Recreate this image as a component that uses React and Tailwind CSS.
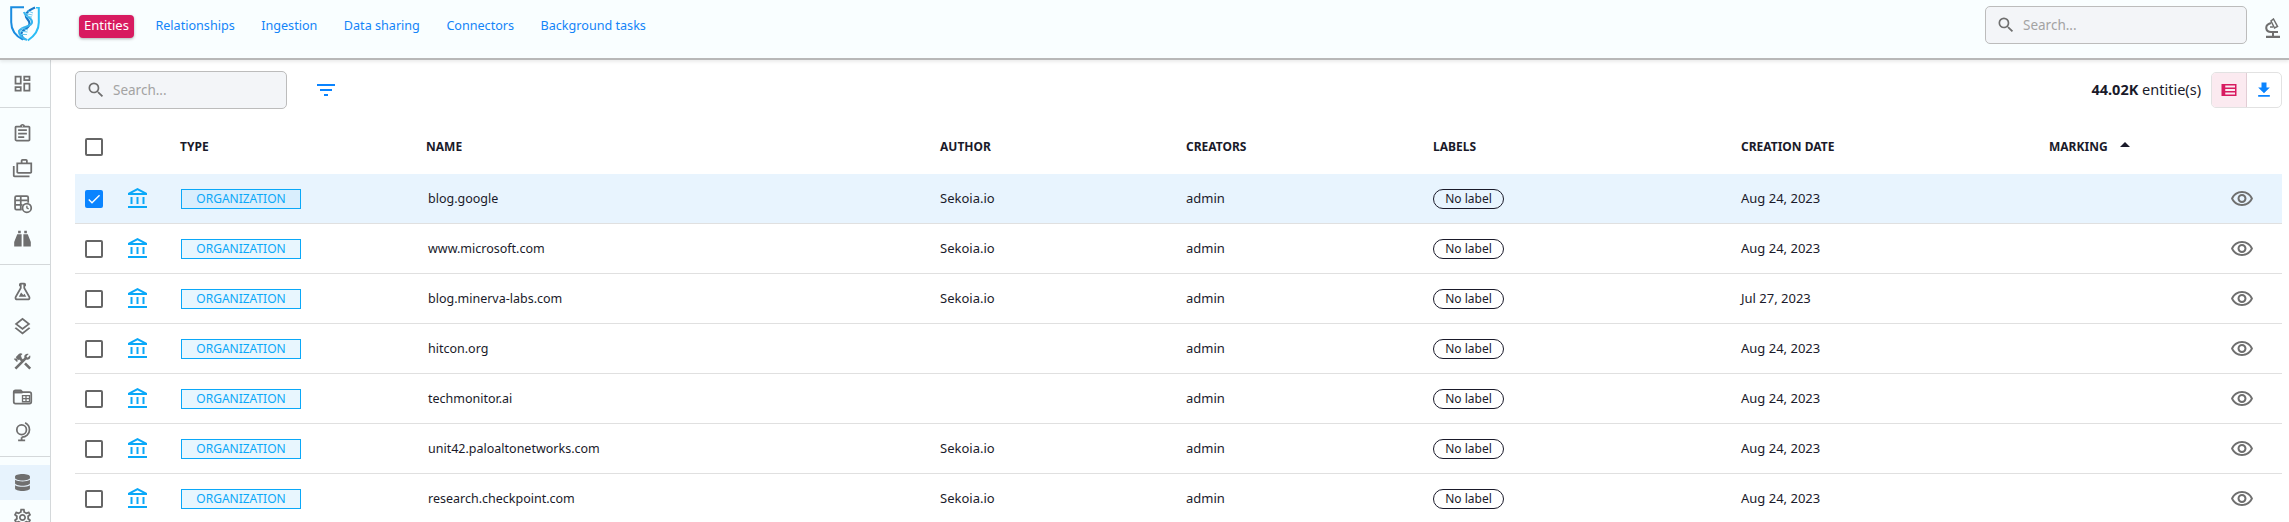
import React from "react";
import {
  MdOutlineDashboard, MdOutlineAssignment, MdOutlineCases, MdOutlineLayers, MdOutlineConstruction,
  MdOutlineSettings, MdOutlineAccountBalance, MdOutlineVisibility, MdSearch, MdFilterList, MdFileDownload, MdCheck,
} from "react-icons/md";
import { FaDatabase } from "react-icons/fa";

const I = ({ d }) => (
  <svg viewBox="0 0 24 24" width="24" height="24" fill="currentColor"><path d={d} /></svg>
);

const TableClock = () => (
  <svg viewBox="0 0 24 24" width="24" height="24" fill="none" stroke="currentColor" strokeWidth="2">
    <path d="M11 19H5a1.500 1.500 0 0 1-1.500-1.500V5A1.500 1.500 0 0 1 5 3.500h12A1.500 1.500 0 0 1 18.500 5v6" />
    <path d="M4 8.500h14M4 13.500h8M10 4v15" />
    <circle cx="17" cy="17" r="5" />
    <path d="M17 14.500V17l2 1.200" strokeWidth="1.500" />
  </svg>
);
const Binoculars = () => (
  <svg viewBox="0 0 24 24" width="24" height="24" fill="currentColor">
    <path d="M7 3h3v3H7zM14 3h3v3h-3zM6 7h5v14H2.500v-5zM13 7h5l3.500 9v5H13z" />
  </svg>
);
const Flask = () => (
  <I d="M5 19a1 1 0 0 0 1 1h12a1 1 0 0 0 1-1c0-.21-.07-.41-.18-.57L13 8.35V4h-2v4.35L5.18 18.43c-.11.16-.18.36-.18.57m1 3a3 3 0 0 1-3-3c0-.6.18-1.160.5-1.630L9 7.810V6a1 1 0 0 1-1-1V4a2 2 0 0 1 2-2h4a2 2 0 0 1 2 2v1a1 1 0 0 1-1 1v1.810l5.500 9.560c.32.47.5 1.030.5 1.630a3 3 0 0 1-3 3H6m7-6 1.340-1.340L16.270 18H7.730l2.660-4.930L13 16Z" />
);
const FolderTable = () => (
  <svg viewBox="0 0 24 24" width="24" height="24" fill="none" stroke="currentColor">
    <path d="M4 5h6l2 2h8a2 2 0 0 1 2 2v9a2 2 0 0 1-2 2H4a2 2 0 0 1-2-2V7a2 2 0 0 1 2-2Z" strokeWidth="2" />
    <path d="M2 6h9l1 2H2Z" fill="currentColor" strokeWidth="1" />
    <path d="M12 11h8v7h-8zM16 11v7M12 14.500h8" strokeWidth="1.500" />
  </svg>
);
const Globe = () => (
  <svg viewBox="0 0 24 24" width="24" height="24" fill="none" stroke="currentColor" strokeWidth="2">
    <circle cx="11" cy="10" r="5.500" />
    <path d="M15 2c3 1.600 5 4.600 5 8a8.500 8.500 0 0 1-9 8.500M11 18.500V22M7 22h8" />
  </svg>
);
const Microscope = () => (
  <svg viewBox="0 0 16 20" width="16" height="20" fill="none" stroke="#6f6f6f">
    <path d="M8.500 1l4 7.500-3 1.500L6 3z" strokeWidth="1.500" />
    <path d="M6 5C2.500 6 1 8.500 1.300 10.500 1.700 13 4 14 6 14h7" strokeWidth="2" />
    <path d="M1 19h14" strokeWidth="2.500" />
    <path d="M8 14v4" strokeWidth="2" />
    <path d="M5 9h3" strokeWidth="1.500" />
  </svg>
);
const ViewList = () => (
  <svg viewBox="0 0 24 24" width="24" height="24" fill="none" stroke="currentColor" strokeWidth="2">
    <rect x="3" y="5" width="18" height="14" />
    <path d="M3 9.700h18M3 14.300h18" />
    <rect x="3" y="5" width="4" height="14" fill="currentColor" stroke="none" />
  </svg>
);
const Logo = () => (
  <svg viewBox="0 0 30 36" width="30" height="36" fill="none">
    <path d="M14 1.200H1.200v15c0 9 6 14.500 11.800 17.500" stroke="#1a8ce0" strokeWidth="2" />
    <path d="M27 1v1.500M28.800 1v15.500c0 8-5 14-11 18" stroke="#2bbdf5" strokeWidth="2" />
    <path d="M25 1.500C17 5 14 8.500 17 12.500c3 3.500 4 7-1 10-6 3.500-6 7-1 11" stroke="#1778c9" strokeWidth="2.200" />
    <path d="M14 6c1 5 8 5 8 10 0 5-10 4-13 9 0 4 3 7 8 9" stroke="#38b4ee" strokeWidth="2.200" />
    <path d="M17 4.500l6 2.500M15.500 7.500l7 1.500M16 10.500l6 .5M11 22l7 2M9.500 25l8 1M11 28.500l6 0" stroke="#68c8f0" strokeWidth="1" />
  </svg>
);

const groups = [
  ["pt-[6px] pb-[6px]", [MdOutlineDashboard]],
  ["pt-2 pb-2", [MdOutlineAssignment, MdOutlineCases, TableClock, Binoculars]],
  ["pt-[9px] pb-[7px]", [Flask, MdOutlineLayers, MdOutlineConstruction, FolderTable, Globe]],
];

const rows = [
  ["blog.google", "Sekoia.io", "Aug 24, 2023"],
  ["www.microsoft.com", "Sekoia.io", "Aug 24, 2023"],
  ["blog.minerva-labs.com", "Sekoia.io", "Jul 27, 2023"],
  ["hitcon.org", "", "Aug 24, 2023"],
  ["techmonitor.ai", "", "Aug 24, 2023"],
  ["unit42.paloaltonetworks.com", "Sekoia.io", "Aug 24, 2023"],
  ["research.checkpoint.com", "Sekoia.io", "Aug 24, 2023"],
];

const cols = "grid grid-cols-[52px_53px_246px_514px_246px_247px_308px_308px_1fr] items-center";

const Search = ({ w }) => (
  <div className={`flex h-[38px] items-center rounded-[5px] border border-[#bcbcbc] bg-[#f3f5f8] pl-[10px] text-[#6f6f6f] ${w}`}>
    <MdSearch size={20} />
    <span className="ml-[7px] text-[13.5px] text-[#a3a3a3]">Search...</span>
  </div>
);

const Head = ({ children, extra = "" }) => (
  <div className={`text-[12px] font-bold text-[#1a1a2a] ${extra}`}>{children}</div>
);

export default function App() {
  return (
    <div className="flex h-[522px] w-[2289px] flex-col overflow-hidden bg-white font-['Noto_Sans',sans-serif] text-[#1a1a2a]">
      <header className="z-10 flex h-[60px] shrink-0 items-center border-b-2 border-[#b8b8b8] bg-[#f9feff] pr-[8px] shadow-[0_2px_3px_rgba(0,0,0,0.08)]">
        <div className="ml-[10px] w-[30px] -translate-y-[5px]"><Logo /></div>
        <nav className="ml-[39px] flex -translate-y-[3px] items-center gap-[16.5px] text-[12.6px] text-[#1384f8]">
          <span className="flex h-[23px] items-center rounded-[4px] bg-[#d81b60] px-[5px] text-[13px] text-white shadow-[0_1px_3px_rgba(0,0,0,0.3)]">Entities</span>
          {["Relationships", "Ingestion", "Data sharing", "Connectors", "Background tasks"].map((t) => (
            <span key={t} className="px-[5px]">{t}</span>
          ))}
        </nav>
        <div className="ml-auto flex -translate-y-[4px] items-center gap-[18px]">
          <Search w="w-[262px]" />
          <div className="translate-y-[3px]"><Microscope /></div>
        </div>
      </header>
      <div className="flex min-h-0 flex-1">
        <aside className="w-[51px] shrink-0 border-r border-[#d4d8da] bg-[#f9feff] text-[#6f6f6f]">
          {groups.map(([pad, g], i) => (
            <div key={i} className={`border-b border-[#d4d8da] ${pad}`}>
              {g.map((Ic, j) => (
                <div key={j} className="flex h-[35px] items-center justify-center pr-[6px] [&>svg]:h-[21px] [&>svg]:w-[21px]"><Ic /></div>
              ))}
            </div>
          ))}
          <div className="pt-2">
            <div className="flex h-[35px] items-center justify-center bg-[#e7f3fd] pr-[6px]"><FaDatabase size={17} /></div>
            <div className="flex h-[35px] items-center justify-center pr-[6px]"><MdOutlineSettings size={21} /></div>
          </div>
        </aside>
        <main className="min-w-0 flex-1 pl-6 pr-[7px]">
          <div className="flex h-[60px] items-center">
            <div className="flex items-center">
              <Search w="w-[212px]" />
              <MdFilterList size={24} className="ml-[27px] text-[#0a84ff]" />
            </div>
            <div className="ml-auto flex items-center">
              <span className="text-[14.5px] text-[#1a1a2a]"><b>44.02K</b> entitie(s)</span>
              <div className="ml-[10px] flex h-[36px] w-[71px] overflow-hidden rounded-[5px] border border-[#e2e2e2]">
                <div className="flex w-1/2 items-center justify-center border-r border-[#e2cdd5] bg-[#fbeaf0] text-[#d81b60] [&>svg]:h-[18px] [&>svg]:w-[18px]"><ViewList /></div>
                <div className="flex w-1/2 items-center justify-center text-[#0a84ff]"><MdFileDownload size={20} /></div>
              </div>
            </div>
          </div>
          <div className={`${cols} h-[54px]`}>
            <div className="pl-[10px]"><span className="block h-[18px] w-[18px] rounded-[2px] border-2 border-[#666]" /></div>
            <div />
            <Head>TYPE</Head>
            <Head>NAME</Head>
            <Head>AUTHOR</Head>
            <Head>CREATORS</Head>
            <Head>LABELS</Head>
            <Head>CREATION DATE</Head>
            <Head extra="flex items-center">MARKING<span className="ml-3 -translate-y-[3px] border-x-[5px] border-b-[5px] border-x-transparent border-b-[#1a1a2a]" /></Head>
          </div>
          {rows.map(([name, author, date], i) => (
            <div key={name} className={`${cols} h-[50px] border-b border-[#e0e0e0] text-[13px] ${i === 0 ? "bg-[#e8f4fe]" : ""}`}>
              <div className="pl-[10px]">
                {i === 0 ? (
                  <span className="flex h-[18px] w-[18px] items-center justify-center rounded-[2px] bg-[#0a84ff] text-white"><MdCheck size={16} /></span>
                ) : (
                  <span className="block h-[18px] w-[18px] rounded-[2px] border-2 border-[#666]" />
                )}
              </div>
              <div className="-ml-[1px] text-[#0aa8f8]"><MdOutlineAccountBalance size={24} /></div>
              <div className="pl-[1px]"><span className={`flex h-[20px] w-[120px] items-center justify-center border border-[#0aa8f8] text-[12px] text-[#0aa8f8] ${i === 0 ? "bg-[#d9eefd]" : "bg-[#e8f6fe]"}`}>ORGANIZATION</span></div>
              <div className="pl-[2px] text-[12.5px] leading-[21px]">{name}</div>
              <div>{author}</div>
              <div>admin</div>
              <div><span className="flex h-[20px] w-[71px] items-center justify-center rounded-full border border-[#1a1a2a] text-[12px]">No label</span></div>
              <div>{date}</div>
              <div className="flex justify-end pr-[28px] text-[#6f6f6f]"><MdOutlineVisibility size={24} /></div>
            </div>
          ))}
        </main>
      </div>
    </div>
  );
}
